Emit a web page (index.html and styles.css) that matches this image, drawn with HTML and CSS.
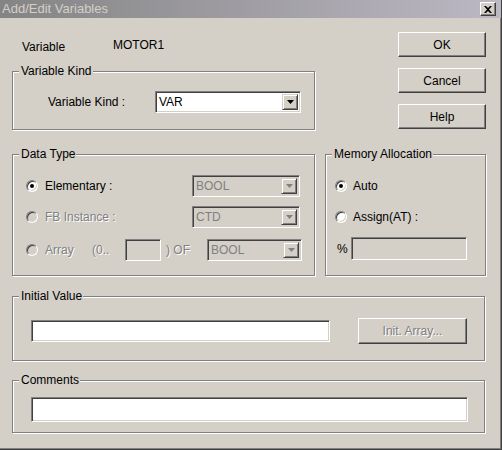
FILE: index.html
```html
<!DOCTYPE html>
<html>
<head>
<meta charset="utf-8">
<title>Add/Edit Variables</title>
<link rel="stylesheet" href="styles.css">
</head>
<body>
<div class="window">
  <div class="titlebar">
    <span class="title">Add/Edit Variables</span>
    <span class="close"><svg width="8" height="7" viewBox="0 0 8 7"><path d="M0 0h2l2 2 2-2h2L5 3.5 8 7H6L4 5 2 7H0l3-3.5z" fill="#000"/></svg></span>
  </div>
  <div class="content">
    <div class="top">
      <div class="top-left">
        <div class="var-row">
          <span class="var-label">Variable</span>
          <span class="var-name">MOTOR1</span>
        </div>
        <fieldset class="group kind">
          <legend>Variable Kind</legend>
          <div class="kind-body">
            <span class="kind-label">Variable Kind :</span>
            <div class="combo kind-combo">
              <span class="combo-text">VAR</span>
              <span class="combo-btn"><svg width="7" height="4" viewBox="0 0 7 4"><path d="M0 0h7L3.5 4z" fill="#000"/></svg></span>
            </div>
          </div>
        </fieldset>
      </div>
      <div class="buttons">
        <button class="btn">OK</button>
        <button class="btn">Cancel</button>
        <button class="btn">Help</button>
      </div>
    </div>

    <div class="mid">
      <fieldset class="group datatype">
        <legend>Data Type</legend>
        <div class="dt-body">
          <div class="row r1">
            <span class="radio checked"></span>
            <span class="rb-label">Elementary :</span>
            <div class="combo disabled dt-combo">
              <span class="combo-text">BOOL</span>
              <span class="combo-btn"><svg width="7" height="4" viewBox="0 0 7 4"><path d="M0 0h7L3.5 4z" fill="#808080"/></svg></span>
            </div>
          </div>
          <div class="row r2">
            <span class="radio off"></span>
            <span class="rb-label dim">FB Instance :</span>
            <div class="combo disabled dt-combo">
              <span class="combo-text">CTD</span>
              <span class="combo-btn"><svg width="7" height="4" viewBox="0 0 7 4"><path d="M0 0h7L3.5 4z" fill="#808080"/></svg></span>
            </div>
          </div>
          <div class="row r3">
            <span class="radio off"></span>
            <span class="arr-label dim">Array</span>
            <span class="arr-open dim">(0..</span>
            <span class="field disabled arr-field"></span>
            <span class="arr-of dim">) OF</span>
            <div class="combo disabled arr-combo">
              <span class="combo-text">BOOL</span>
              <span class="combo-btn"><svg width="7" height="4" viewBox="0 0 7 4"><path d="M0 0h7L3.5 4z" fill="#808080"/></svg></span>
            </div>
          </div>
        </div>
      </fieldset>

      <fieldset class="group memory">
        <legend>Memory Allocation</legend>
        <div class="mem-body">
          <div class="row m1">
            <span class="radio checked"></span>
            <span class="mem-label">Auto</span>
          </div>
          <div class="row m2">
            <span class="radio"></span>
            <span class="mem-label">Assign(AT) :</span>
          </div>
          <div class="row m3">
            <span class="pct">%</span>
            <span class="field disabled mem-field"></span>
          </div>
        </div>
      </fieldset>
    </div>

    <fieldset class="group initial">
      <legend>Initial Value</legend>
      <div class="init-body">
        <span class="field init-field"></span>
        <button class="btn init-btn" disabled>Init. Array...</button>
      </div>
    </fieldset>

    <fieldset class="group comments">
      <legend>Comments</legend>
      <div class="comm-body">
        <span class="field comm-field"></span>
      </div>
    </fieldset>
  </div>
</div>
</body>
</html>
```
FILE: styles.css
```css
* { box-sizing: border-box; }

html, body {
  margin: 0;
  padding: 0;
  background: #d4d0c8;
}

body {
  font-family: "Liberation Sans", Arial, sans-serif;
  font-size: 12px;
  color: #000;
}

.window {
  width: 502px;
  height: 450px;
  background: #d4d0c8;
  border-right: 1px solid #404040;
  border-bottom: 1px solid #404040;
  box-shadow: inset -1px -1px 0 #808080;
  overflow: hidden;
}

.titlebar {
  height: 18px;
  display: flex;
  align-items: center;
  justify-content: space-between;
  padding: 0 5px 0 2px;
  background: linear-gradient(to right, #848484, #bcb8c4);
}

.title {
  font-size: 13px;
  line-height: 16px;
  color: #d4d0c8;
}

.close {
  width: 16px;
  height: 14px;
  display: flex;
  align-items: center;
  justify-content: center;
  background: #d4d0c8;
  border: 1px solid;
  border-color: #fff #404040 #404040 #fff;
  box-shadow: inset -1px -1px 0 #808080;
}

.content {
  padding: 0 0 0 12px;
}

.top {
  display: flex;
  align-items: flex-start;
}

.top-left {
  width: 303px;
}

.var-row {
  display: flex;
  align-items: flex-start;
  margin-top: 22px;
  height: 14px;
  line-height: 14px;
}

.var-label {
  width: 101px;
  padding-left: 10px;
}

.var-name {
  margin-top: -2px;
}

/* group boxes */
.group {
  margin: 0;
  padding: 0;
  min-width: 0;
  border: 1px solid #808080;
  box-shadow: inset 1px 1px 0 #fff, 1px 1px 0 #fff;
}

.group legend {
  margin-left: 6px;
  padding: 0 1px 0 2px;
  line-height: 14px;
  font-size: 12px;
  background: #d4d0c8;
}

.kind {
  margin-top: 10px;
}

.kind-body {
  display: flex;
  align-items: center;
  padding: 13px 0 16px 35px;
}

.kind-label {
  width: 107px;
}

/* combo boxes and fields */
.combo {
  display: flex;
  align-items: stretch;
  height: 22px;
  background: #fff;
  border: 1px solid;
  border-color: #808080 #fff #fff #808080;
  box-shadow: inset 1px 1px 0 #404040, inset -1px -1px 0 #d4d0c8;
  padding: 2px;
}

.combo-text {
  flex: 1;
  line-height: 16px;
  padding-left: 1px;
}

.combo-btn {
  width: 16px;
  display: flex;
  align-items: center;
  justify-content: center;
  background: #d4d0c8;
  border: 1px solid;
  border-color: #d4d0c8 #404040 #404040 #d4d0c8;
  box-shadow: inset 1px 1px 0 #fff, inset -1px -1px 0 #808080;
}

.combo.disabled {
  background: #d4d0c8;
  color: #808080;
}

.kind-combo {
  width: 146px;
}

.field {
  display: block;
  background: #fff;
  border: 1px solid;
  border-color: #808080 #fff #fff #808080;
  box-shadow: inset 1px 1px 0 #404040, inset -1px -1px 0 #d4d0c8;
}

.field.disabled {
  background: #d4d0c8;
}

/* buttons */
.buttons {
  margin-left: 83px;
  margin-top: 14px;
  display: flex;
  flex-direction: column;
  gap: 11px;
}

.btn {
  width: 88px;
  height: 25px;
  padding: 0;
  font-family: "Liberation Sans", Arial, sans-serif;
  font-size: 12px;
  color: #000;
  background: #d4d0c8;
  border: 1px solid;
  border-color: #fff #404040 #404040 #fff;
  box-shadow: inset -1px -1px 0 #808080;
}

.btn:disabled {
  color: #808080;
  text-shadow: 1px 1px 0 #fff;
}

/* middle */
.mid {
  display: flex;
  gap: 10px;
  margin-top: 17px;
}

.datatype {
  width: 303px;
}

.memory {
  width: 161px;
}

.row {
  display: flex;
  align-items: center;
  height: 22px;
}

.dt-body {
  padding: 14px 0 14px 13px;
}

.r2 { margin-top: 9px; }
.r3 { margin-top: 11px; }

.radio {
  position: relative;
  width: 12px;
  height: 12px;
  flex: none;
  border-radius: 50%;
  background: #fff;
  border: 1px solid;
  border-color: #808080 #fff #fff #808080;
  box-shadow: inset 1px 1px 0 #404040, inset -1px -1px 0 #d4d0c8;
}

.radio.off {
  background: #d4d0c8;
}

.radio.checked::after {
  content: "";
  position: absolute;
  left: 3px;
  top: 3px;
  width: 4px;
  height: 4px;
  border-radius: 50%;
  background: #000;
}

.dim {
  color: #808080;
  text-shadow: 1px 1px 0 #fff;
}

.rb-label {
  width: 154px;
  padding-left: 7px;
}

.dt-combo {
  width: 108px;
}

.arr-label {
  width: 54px;
  padding-left: 7px;
}

.arr-open {
  width: 33px;
}

.arr-field {
  width: 36px;
  height: 22px;
}

.arr-of {
  width: 46px;
  padding-left: 5px;
}

.arr-combo {
  width: 95px;
}

.mem-body {
  padding: 14px 0 14px 9px;
}

.m2 { margin-top: 9px; }
.m3 { margin-top: 9px; height: 23px; }

.mem-label {
  padding-left: 6px;
}

.pct {
  width: 16px;
  padding-left: 2px;
}

.mem-field {
  width: 116px;
  height: 23px;
}

/* initial value */
.initial {
  width: 473px;
  margin-top: 13px;
}

.init-body {
  display: flex;
  align-items: center;
  padding: 15px 0 16px 18px;
}

.init-field {
  width: 299px;
  height: 22px;
}

.init-btn {
  width: 109px;
  height: 26px;
  margin-left: 28px;
}

.comments {
  width: 473px;
  margin-top: 12px;
}

.comm-body {
  padding: 10px 0 10px 18px;
}

.comm-field {
  width: 437px;
  height: 25px;
}
```
